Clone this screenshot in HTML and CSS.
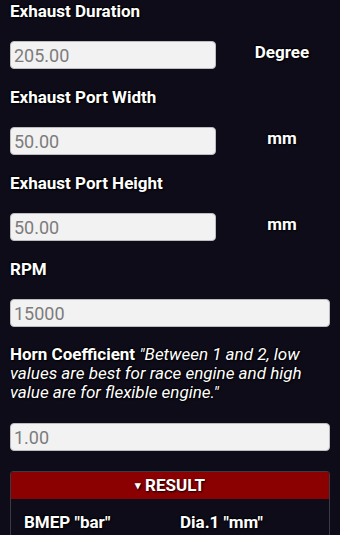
FILE: index.html
```html
<!DOCTYPE html>
<html lang="en">
<head>
    <meta charset="UTF-8">
    <meta name="viewport" content="width=device-width, initial-scale=1.0">
    <title>Exhaust Calculator</title>
    <link rel="stylesheet" href="styles.css">
</head>
<body>
    <div class="form">
        <div class="field">
            <label class="label">Exhaust Duration</label>
            <div class="row">
                <input class="input short" type="text" value="205.00" readonly>
                <span class="unit">Degree</span>
            </div>
        </div>

        <div class="field">
            <label class="label">Exhaust Port Width</label>
            <div class="row">
                <input class="input short" type="text" value="50.00" readonly>
                <span class="unit">mm</span>
            </div>
        </div>

        <div class="field">
            <label class="label">Exhaust Port Height</label>
            <div class="row">
                <input class="input short" type="text" value="50.00" readonly>
                <span class="unit">mm</span>
            </div>
        </div>

        <div class="field">
            <label class="label">RPM</label>
            <input class="input" type="text" value="15000" readonly>
        </div>

        <div class="field">
            <p class="label note">Horn Coefficient <em>"Between 1 and 2, low values are best for race engine and high value are for flexible engine."</em></p>
            <input class="input" type="text" value="1.00" readonly>
        </div>

        <!-- Result panel -->
        <div class="result">
            <div class="result-head"><span class="caret">&#9662;</span> RESULT</div>
            <div class="result-body">
                <span>BMEP "bar"</span>
                <span>Dia.1 "mm"</span>
            </div>
        </div>
    </div>
</body>
</html>
```

FILE: styles.css
```css
* {
    box-sizing: border-box;
}

body {
    margin: 0;
    background: #0e0c18;
    font-family: Roboto, 'Liberation Sans', sans-serif;
    color: #fff;
}

.form {
    padding: 1px 10px 0 10px;
}

.field {
    margin-bottom: 18px;
}

.label {
    display: block;
    font-size: 17px;
    font-weight: bold;
    line-height: 20px;
    margin: 0 0 20px 0;
    text-shadow: 1px 1px 2px #000, -1px -1px 1px #000;
}

.note {
    line-height: 19px;
    margin-bottom: 21px;
    padding-right: 8px;
}

.note em {
    font-weight: normal;
}

.row {
    display: flex;
    align-items: center;
}

.input {
    display: block;
    width: 100%;
    height: 28px;
    padding: 0 3px;
    font-family: Roboto, 'Liberation Sans', sans-serif;
    font-size: 18px;
    color: #7c7c7c;
    background: #f2f2f2;
    border: 1px solid #bdbdbd;
    border-radius: 4px;
    outline: none;
}

.short {
    width: 206px;
    flex: none;
}

.unit {
    flex: 1;
    text-align: center;
    padding-left: 18px;
    margin-bottom: 7px;
    font-size: 17px;
    font-weight: bold;
    text-shadow: 1px 1px 2px #000, -1px -1px 1px #000;
}

.result {
    margin-top: 20px;
    border: 1px solid #3a3a42;
    border-radius: 3px;
    overflow: hidden;
}

.result-head {
    background: #8b0000;
    height: 27px;
    line-height: 27px;
    text-align: center;
    font-size: 17px;
    font-weight: bold;
    text-shadow: 1px 1px 2px #000;
}

.caret {
    font-size: 11px;
    vertical-align: 2px;
}

.result-body {
    display: grid;
    grid-template-columns: 156px 1fr;
    padding: 13px 13px 20px;
    font-size: 17px;
    font-weight: bold;
    text-shadow: 1px 1px 2px #000, -1px -1px 1px #000;
}
```
